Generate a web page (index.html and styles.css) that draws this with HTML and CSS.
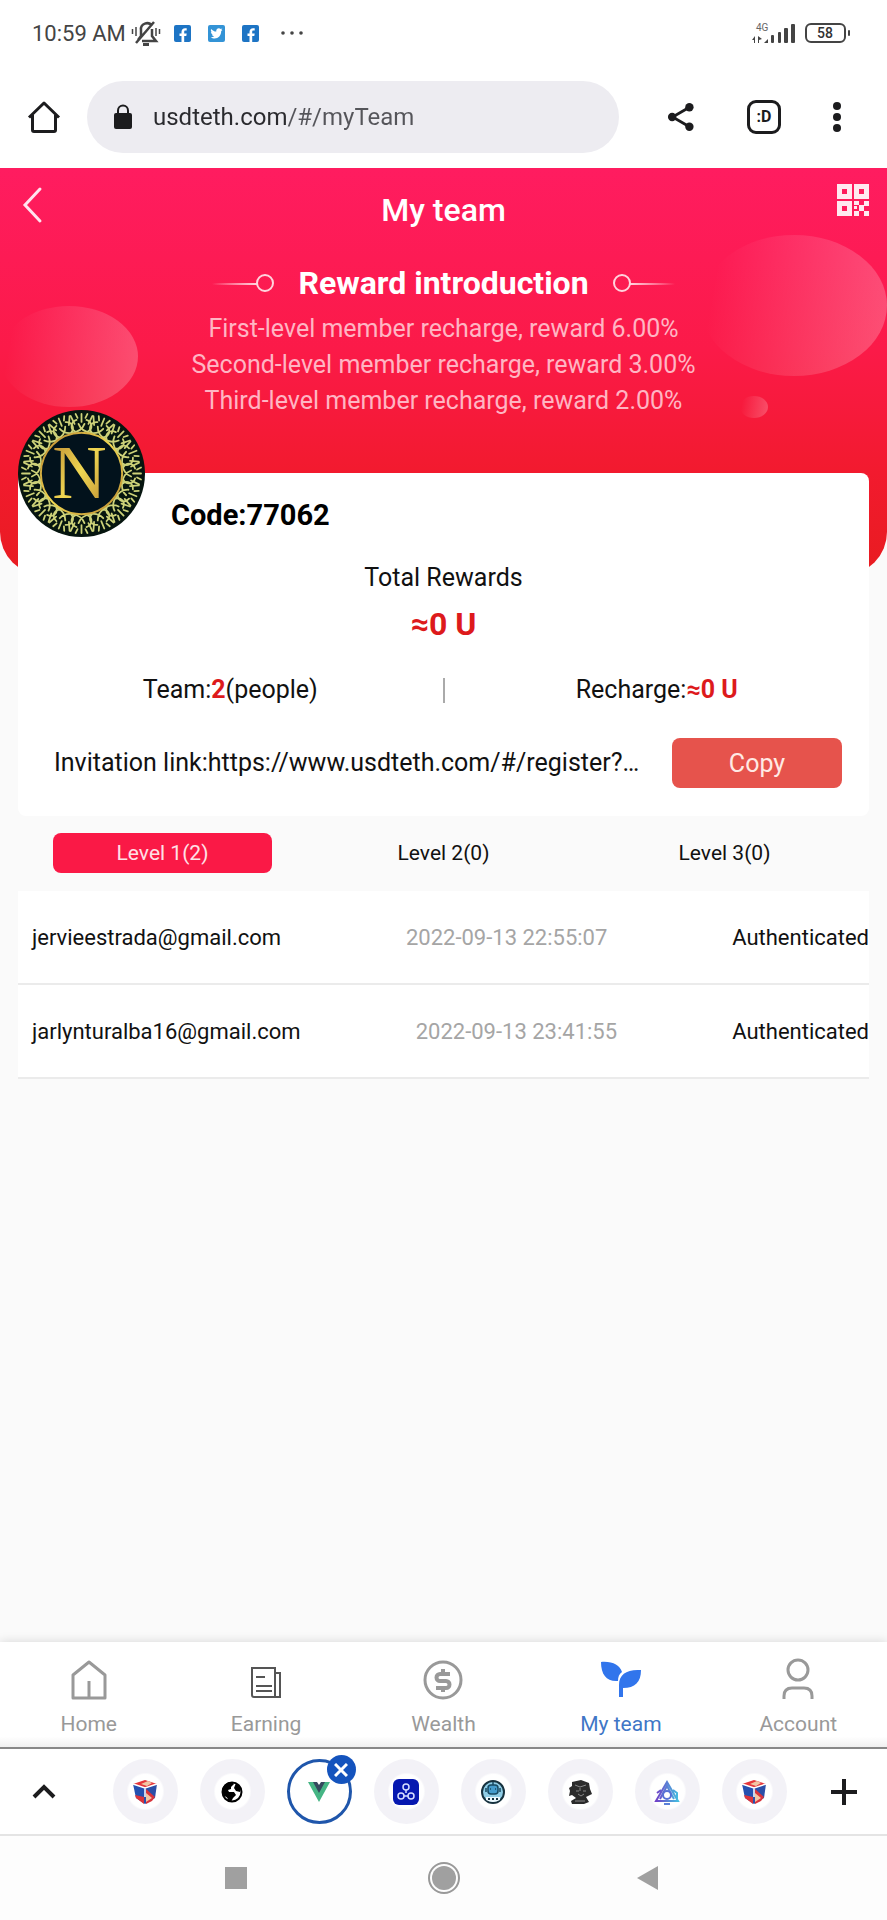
FILE: index.html
```html
<!DOCTYPE html>
<html lang="en">
<head>
    <meta charset="utf-8">
    <meta name="viewport" content="width=device-width, initial-scale=1">
    <title>My team</title>
    <link rel="stylesheet" href="styles.css">
</head>
<body>
    <div class="status-bar">
        <span class="time">10:59 AM</span>
        <svg class="bell" width="30" height="26" viewBox="0 0 30 26" fill="none" stroke="#444" stroke-width="2">
            <path d="M7 20l3-4v-6a6 6 0 0 1 11-4M21 9v7l4 5H11M5 23L23 2" stroke-width="2.500" />
            <path d="M12 24.500h6" stroke-width="3" />
            <path d="M1.500 9v5M5 7v9M28.500 9v5M25 8v8" stroke-width="1.500" />
        </svg>
        <svg width="17" height="17" viewBox="0 0 17 17">
            <rect width="17" height="17" rx="2" fill="#1d74c4" />
            <path d="M7.500 17v-6h-2V8.500h2V7c0-2.500 1.400-3.800 3.600-3.800h1.600v2.400h-1.200c-1 0-1.300.5-1.300 1.300v1.600h2.500l-.4 2.500h-2.100v6z" fill="#fff" />
        </svg>
        <svg width="17" height="17" viewBox="0 0 17 17">
            <rect width="17" height="17" rx="2" fill="#3393d6" />
            <path d="M14.500 5l-1.300 1.100c.1 4.500-3 7.400-6.500 7.400-1.500 0-3-.4-4-1.200 1.400.1 2.600-.2 3.500-1-1.200-.1-2-.8-2.300-1.700h1c-1.300-.4-2-1.300-2-2.500l1 .2c-1.100-.9-1.300-2.200-.7-3.300 1.300 1.600 3 2.500 5.100 2.600-.4-2 .9-3.300 2.500-3.300.8 0 1.400.3 1.900.8l1.600-.6c-.2.700-.5 1-1 1.400z" fill="#fff" />
        </svg>
        <svg width="17" height="17" viewBox="0 0 17 17">
            <rect width="17" height="17" rx="2" fill="#1d74c4" />
            <path d="M7.500 17v-6h-2V8.500h2V7c0-2.500 1.400-3.800 3.600-3.800h1.600v2.400h-1.200c-1 0-1.300.5-1.300 1.300v1.600h2.500l-.4 2.500h-2.100v6z" fill="#fff" />
        </svg>
        <svg class="more" width="24" height="4" viewBox="0 0 24 4" fill="#444">
            <circle cx="3" cy="2" r="1.800" /><circle cx="12" cy="2" r="1.800" /><circle cx="21" cy="2" r="1.800" />
        </svg>
        <svg class="signal" width="44" height="24" viewBox="0 0 44 24" fill="#444">
            <text x="4" y="10" font-family="Roboto, sans-serif" font-size="10" fill="#666">4G</text>
            <path d="M0 19l3-4v7H2v-3zM6 15l4 3-3 1v3H6zM12 22l4-4v4z" />
            <rect x="19" y="14" width="3" height="8" rx="1" />
            <rect x="26" y="11" width="3" height="11" rx="1" />
            <rect x="32" y="7" width="4" height="15" rx="1" />
            <rect x="39" y="3" width="4" height="19" rx="1" />
        </svg>
        <svg width="46" height="20" viewBox="0 0 46 20">
            <rect x="1" y="1" width="39" height="18" rx="5" fill="#fff" stroke="#444" stroke-width="2" />
            <rect x="43" y="7" width="2" height="6" rx="1" fill="#444" />
            <text x="20" y="15" text-anchor="middle" font-family="Roboto, sans-serif" font-size="14" font-weight="500" fill="#333">58</text>
        </svg>
    </div>

    <header class="browser-bar">
        <button class="icon-btn" aria-label="Home page">
            <svg width="34" height="34" viewBox="0 0 34 34" fill="none" stroke="#1c1c1e" stroke-width="3">
                <path d="M2 17.500L17 3l15 14.500M5.500 15v15q0 1.500 1.500 1.500h20q1.500 0 1.500-1.500V15" stroke-linejoin="round" />
            </svg>
        </button>
        <label class="address">
            <svg width="20" height="26" viewBox="0 0 20 26">
                <rect x="1" y="9" width="18" height="16" rx="2" fill="#1c1c1e" />
                <path d="M5 10V6.500a5 5 0 0 1 10 0V10" fill="none" stroke="#1c1c1e" stroke-width="2" />
            </svg>
            <input class="address-input" type="text" aria-label="Address" value="usdteth.com/#/myTeam">
        </label>
        <div class="browser-actions">
            <button class="icon-btn" aria-label="Share">
                <svg width="28" height="30" viewBox="0 0 30 32" fill="#1c1c1e">
                    <path d="M24 5.500L6 16l18 10.500" fill="none" stroke="#1c1c1e" stroke-width="3" />
                    <circle cx="24" cy="5.500" r="4.500" /><circle cx="5.500" cy="16" r="4.500" /><circle cx="24" cy="26.500" r="4.500" />
                </svg>
            </button>
            <button class="tab-count" aria-label="Tabs">:D</button>
            <button class="icon-btn" aria-label="Menu">
                <svg width="8" height="30" viewBox="0 0 8 30" fill="#1c1c1e">
                    <circle cx="4" cy="4" r="4" /><circle cx="4" cy="15" r="4" /><circle cx="4" cy="26" r="4" />
                </svg>
            </button>
        </div>
    </header>

    <main class="page">
        <section class="hero">
            <div class="bubble bubble-left"></div>
            <div class="bubble bubble-right"></div>
            <div class="bubble bubble-small"></div>
            <div class="hero-top">
                <button class="icon-btn back" aria-label="Back">
                    <svg width="28" height="40" viewBox="0 0 28 40" fill="none" stroke="#ffe3ee" stroke-width="3" stroke-linecap="round">
                        <path d="M22 5L7 21l15 16" />
                    </svg>
                </button>
                <h1>My team</h1>
                <button class="icon-btn qr" aria-label="QR code">
                    <svg width="32" height="32" viewBox="0 0 32 32" fill="#ffe9f0">
                        <path fill-rule="evenodd" d="M0 0h15v15H0zM5 5v5h5V5zM17 0h15v15H17zM22 5v5h5V5zM0 17h15v15H0zM5 22v5h5v-5z" />
                        <path d="M17 17h5v4h-5zM27 17h5v5h-5zM22 21h5v6h-5zM17 27h5v5h-5zM27 27h5v5h-5zM17 22h3v3h-3z" />
                    </svg>
                </button>
            </div>
            <div class="reward-title">
                <svg width="62" height="20" viewBox="0 0 62 20">
                    <defs>
                        <linearGradient id="fade">
                            <stop offset="0" stop-color="#fff" stop-opacity="0" />
                            <stop offset="1" stop-color="#ffd3dd" />
                        </linearGradient>
                    </defs>
                    <rect x="0" y="10" width="45" height="2" fill="url(#fade)" />
                    <circle cx="53" cy="10" r="8" fill="none" stroke="#ffd3dd" stroke-width="2" />
                </svg>
                <h2>Reward introduction</h2>
                <svg width="62" height="20" viewBox="0 0 62 20">
                    <g transform="matrix(-1 0 0 1 62 0)">
                        <rect x="0" y="10" width="45" height="2" fill="url(#fade)" />
                        <circle cx="53" cy="10" r="8" fill="none" stroke="#ffd3dd" stroke-width="2" />
                    </g>
                </svg>
            </div>
            <p>First-level member recharge, reward 6.00%</p>
            <p>Second-level member recharge, reward 3.00%</p>
            <p>Third-level member recharge, reward 2.00%</p>
        </section>

        <section class="card">
            <svg class="avatar" viewBox="0 0 128 128">
                <defs>
                    <linearGradient id="gold" x1="0" y1="0" x2="1" y2="1">
                        <stop offset="0" stop-color="#b9842f" />
                        <stop offset=".5" stop-color="#f0d752" />
                        <stop offset="1" stop-color="#b8862e" />
                    </linearGradient>
                    <g id="lace" fill="none" stroke="#cdd279" stroke-width="1.800" stroke-linecap="round">
                        <path d="M58 22c-6-3-5-10 1-12M70 22c6-3 5-10-1-12M54 23q10-1 13-9M74 23q-10-1-13-9" />
                        <path d="M64 12V4M57 14l-4-8M71 14l4-8M60 8l-2-4M68 8l2-4" />
                    </g>
                    <g id="lace-quarter">
                        <use href="#lace" />
                        <use href="#lace" transform="rotate(22.500 64 64)" />
                        <use href="#lace" transform="rotate(45 64 64)" />
                        <use href="#lace" transform="rotate(67.500 64 64)" />
                    </g>
                </defs>
                <circle cx="64" cy="64" r="64" fill="#06150f" />
                <use href="#lace-quarter" />
                <use href="#lace-quarter" transform="rotate(90 64 64)" />
                <use href="#lace-quarter" transform="rotate(180 64 64)" />
                <use href="#lace-quarter" transform="rotate(270 64 64)" />
                <circle cx="64" cy="64" r="41" fill="#02121c" stroke="url(#gold)" stroke-width="2" />
                <text x="62" y="89" text-anchor="middle" font-family="Liberation Serif, serif" font-size="76" fill="url(#gold)">N</text>
            </svg>
            <div class="code">Code:77062</div>
            <div class="total-label">Total Rewards</div>
            <div class="total-value">≈0 U</div>
            <div class="totals">
                <div>Team:<b>2</b>(people)</div>
                <span class="divider"></span>
                <div>Recharge:<b>≈0 U</b></div>
            </div>
            <div class="invite">
                <span class="invite-link">Invitation link:https://www.usdteth.com/#/register?…</span>
                <button class="copy">Copy</button>
            </div>
        </section>

        <div class="levels">
            <button class="level active">Level 1(2)</button>
            <button class="level">Level 2(0)</button>
            <button class="level">Level 3(0)</button>
        </div>

        <ul class="members">
            <li>
                <span>jervieestrada@gmail.com</span>
                <time>2022-09-13 22:55:07</time>
                <span>Authenticated</span>
            </li>
            <li>
                <span>jarlynturalba16@gmail.com</span>
                <time>2022-09-13 23:41:55</time>
                <span>Authenticated</span>
            </li>
        </ul>
    </main>

    <nav class="tabbar">
        <a href="#home">
            <svg width="44" height="44" viewBox="0 0 44 44" fill="none" stroke="#999" stroke-width="3">
                <path d="M6 40V17L22 4l16 13v23zM22 23v17" stroke-linejoin="round" />
            </svg>
            Home
        </a>
        <a href="#earning">
            <svg width="44" height="44" viewBox="0 0 44 44" fill="none" stroke="#555" stroke-width="2">
                <path d="M8 10h23v29H10q-2 0-2-2zM31 15h5v24h-5M12 19h9M12 28h16M12 33h16" />
            </svg>
            Earning
        </a>
        <a href="#wealth">
            <svg width="44" height="44" viewBox="0 0 44 44" fill="none" stroke="#999" stroke-width="3">
                <circle cx="22" cy="22" r="18" />
                <path d="M29 16H19a3.500 3.500 0 0 0 0 7h6a3.500 3.500 0 0 1 0 7H15M22 11v5M22 29v5" stroke-width="4" />
            </svg>
            Wealth
        </a>
        <a class="current" href="#team">
            <svg width="44" height="44" viewBox="0 0 44 44" fill="#3175ec">
                <path d="M2 4c11-1 19 3 21 10-3 2-4 5-4 9C8 24 2 17 2 4z" />
                <path d="M42 12c0 12-6 18-18 18v9h-4V27c0-11 8-16 22-15z" />
            </svg>
            My team
        </a>
        <a href="#account">
            <svg width="44" height="44" viewBox="0 0 44 44" fill="none" stroke="#999" stroke-width="3">
                <circle cx="22" cy="12" r="10" />
                <path d="M8 41v-3q0-8 8-8h12q8 0 8 8v3" />
            </svg>
            Account
        </a>
    </nav>

    <div class="tab-strip">
        <button class="icon-btn" aria-label="Expand">
            <svg width="24" height="16" viewBox="0 0 24 16" fill="none" stroke="#1c1c1e" stroke-width="4"><path d="M2 13L12 3l10 10" /></svg>
        </button>
        <div class="tabs">
            <button class="tab" aria-label="Tab 1">
                <svg width="26" height="26" viewBox="0 0 26 26">
                    <defs>
                        <g id="cube">
                            <path d="M1 5L13 8v17L4 19z" fill="#2450b0" />
                            <path d="M25 5L13 8v17l10-6z" fill="#2b4fa8" />
                            <path d="M1 5l12-4 12 4-12 4z" fill="#e5373b" />
                            <path d="M3 16l9 2v7l-8-6zM14 10l9 8-3 4-6 3z" fill="#d9343c" />
                            <path d="M9 5l7-3 4 2-5 3zM14 14l6 5-6 4z" fill="#f1c6a4" />
                            <path d="M1 5l12 4 12-4M13 9v9" fill="none" stroke="#fff" stroke-width="1.500" />
                        </g>
                    </defs>
                    <use href="#cube" />
                </svg>
            </button>
            <button class="tab" aria-label="Tab 2">
                <svg width="26" height="26" viewBox="0 0 26 26">
                    <circle cx="13" cy="13" r="9.500" fill="#fff" stroke="#000" stroke-width="2" />
                    <path d="M3 12c1-6 5-9 10-9l2 2-3 3v2l-3 1 1 2h5l2 3-3 3-2 4-3-1c0-3-1-4-4-5zM17 4l5 5-1 4-4-1-2-3z" fill="#000" />
                </svg>
            </button>
            <button class="tab selected" aria-label="Close tab 3">
                <svg width="26" height="26" viewBox="0 0 26 26">
                    <path d="M2 3h6l5 9 5-9h6L13 23z" fill="#45b584" />
                    <path d="M7 3h4l2 3 2-3h4l-6 11z" fill="#34495e" />
                </svg>
                <span class="close">
                    <svg width="14" height="14" viewBox="0 0 14 14" stroke="#fff" stroke-width="3"><path d="M1 1l12 12M13 1L1 13" /></svg>
                </span>
            </button>
            <button class="tab" aria-label="Tab 4">
                <svg width="26" height="26" viewBox="0 0 26 26">
                    <rect width="26" height="26" rx="6" fill="#0618b0" />
                    <g fill="none" stroke="#d5ddff" stroke-width="1.500">
                        <circle cx="13" cy="8" r="3" /><circle cx="8" cy="17" r="3" /><circle cx="18" cy="17" r="3" />
                        <path d="M13 11v3M11 17h4" />
                    </g>
                </svg>
            </button>
            <button class="tab" aria-label="Tab 5">
                <svg width="26" height="26" viewBox="0 0 26 26">
                    <circle cx="13" cy="13" r="11" fill="#8fcde6" stroke="#17323f" stroke-width="2" />
                    <rect x="8" y="6" width="10" height="9" rx="3" fill="#459ccc" stroke="#174a63" stroke-width="1.500" />
                    <path d="M10 10h1M15 10h1M6 9v4M20 9v4M13 3v3" stroke="#174a63" stroke-width="1.500" />
                    <path d="M6 18h14v3q-7 4-14 0z" fill="#eefaff" />
                    <path d="M8 20h2M12 20h2M16 20h2" stroke="#17323f" stroke-width="2" />
                </svg>
            </button>
            <button class="tab" aria-label="Tab 6">
                <svg width="26" height="26" viewBox="0 0 26 26">
                    <path d="M5 3l9-2 8 3 1 6 2 5-4 2-2 1 3 5-5 2H5l-1-3 5-3-4-3-3 1 1-5-1-3 3-2z" fill="#2b2b2b" />
                    <path d="M8 6l5 2 6-2M9 12h3M16 12h3M11 15l3 2 3-2M8 22h10M13 9v3" fill="none" stroke="#888" />
                </svg>
            </button>
            <button class="tab" aria-label="Tab 7">
                <svg width="26" height="26" viewBox="0 0 26 26" fill="none" stroke-width="2">
                    <defs>
                        <linearGradient id="triangle"><stop offset="0" stop-color="#7040c8" /><stop offset="1" stop-color="#44bde0" /></linearGradient>
                    </defs>
                    <path d="M13 3L2 22h22zM7 11L3 14M6 20l7-13 7 13M19 11l4 3v8" stroke="url(#triangle)" />
                    <circle cx="13" cy="16" r="4" stroke="#5872d6" />
                    <path d="M10 25h6" stroke="#5a80d8" />
                </svg>
            </button>
            <button class="tab" aria-label="Tab 8">
                <svg width="26" height="26" viewBox="0 0 26 26"><use href="#cube" /></svg>
            </button>
        </div>
        <button class="icon-btn" aria-label="New tab">
            <svg width="26" height="26" viewBox="0 0 26 26" stroke="#1c1c1e" stroke-width="4"><path d="M0 13h26M13 0v26" /></svg>
        </button>
    </div>

    <div class="system-nav">
        <button class="icon-btn" aria-label="Recent apps">
            <svg width="32" height="32" viewBox="0 0 32 32"><rect x="5" y="5" width="22" height="22" fill="#a0a0a0" /></svg>
        </button>
        <button class="icon-btn" aria-label="Home screen">
            <svg width="32" height="32" viewBox="0 0 32 32">
                <circle cx="16" cy="16" r="15" fill="none" stroke="#999" stroke-width="2" /><circle cx="16" cy="16" r="12" fill="#a0a0a0" />
            </svg>
        </button>
        <button class="icon-btn" aria-label="Go back">
            <svg width="32" height="32" viewBox="0 0 32 32"><path d="M1 16L22 4v24z" fill="#a0a0a0" /></svg>
        </button>
    </div>
</body>
</html>
```
FILE: styles.css
```css
* {
    box-sizing: border-box;
}
body {
    margin: 0;
    min-height: 100vh;
    display: flex;
    flex-direction: column;
    background-color: #fff;
    color: #111;
    font-family: Roboto, "Liberation Sans", sans-serif;
    font-size: 25px;
}
h1, h2, p, ul {
    margin: 0;
    padding: 0;
    font-size: inherit;
}
svg {
    display: block;
    flex-shrink: 0;
}
button {
    border: 0;
    padding: 0;
    background: none;
    color: inherit;
    font-family: inherit;
    font-size: inherit;
    cursor: pointer;
}
a {
    color: inherit;
    text-decoration: none;
}
.icon-btn {
    display: flex;
    align-items: center;
    justify-content: center;
}

/* phone status bar */
.status-bar {
    display: flex;
    align-items: center;
    gap: 17px;
    height: 66px;
    padding: 0 36px 0 32px;
}
.time {
    font-size: 22px;
    color: #444;
}
.bell {
    margin: 0 -4px 0 -12px;
}
.more {
    margin-left: 4px;
}
.signal {
    margin-left: auto;
    margin-right: -8px;
}

/* browser toolbar */
.browser-bar {
    display: flex;
    align-items: center;
    gap: 26px;
    padding: 15px 46px 15px 27px;
}
.address {
    flex: 1;
    display: flex;
    align-items: center;
    gap: 20px;
    height: 72px;
    padding: 0 26px;
    border-radius: 36px;
    background-color: #edecf1;
}
.address-input {
    flex: 1;
    min-width: 0;
    border: 0;
    padding: 0;
    outline: none;
    font-family: inherit;
    font-size: 24px;
    /* the path is lighter than the host */
    background: linear-gradient(to right, #2a2a2e 134px, #55555a 134px);
    background-clip: text;
    -webkit-background-clip: text;
    color: transparent;
}
.browser-actions {
    display: flex;
    align-items: center;
    gap: 52px;
    margin-left: 22px;
}
.tab-count {
    width: 34px;
    height: 34px;
    border: 3px solid #1c1c1e;
    border-radius: 9px;
    color: #1c1c1e;
    font-size: 16px;
    font-weight: 700;
    line-height: 26px;
}

/* page */
.page {
    flex: 1;
    background-color: #fafafa;
}
.hero {
    position: relative;
    overflow: hidden;
    padding-bottom: 156px;
    border-radius: 0 0 43px 43px;
    background: linear-gradient(#ff1c60, #fb1a48 45%, #f21a2e 75%, #e81c20);
    color: #ffb5c3;
    text-align: center;
    line-height: 36px;
}
.bubble {
    position: absolute;
    border-radius: 50%;
    background: linear-gradient(100deg, rgba(255, 255, 255, 0) 10%, rgba(255, 255, 255, .24));
}
.bubble-left {
    top: 138px;
    left: 0;
    width: 138px;
    height: 101px;
}
.bubble-right {
    top: 67px;
    right: 0;
    width: 186px;
    height: 141px;
}
.bubble-small {
    top: 228px;
    right: 119px;
    width: 28px;
    height: 22px;
}
.hero-top {
    display: grid;
    grid-template-columns: 1fr auto 1fr;
    align-items: start;
    padding: 16px 18px 0;
}
.hero-top h1 {
    color: #fff;
    font-size: 32px;
    font-weight: 500;
    line-height: 52px;
}
.back {
    justify-self: start;
}
.qr {
    justify-self: end;
}
.reward-title {
    display: flex;
    align-items: center;
    justify-content: center;
    gap: 24px;
    margin: 27px 0 8px;
}
.reward-title h2 {
    color: #fff;
    font-size: 32px;
    font-weight: 700;
    line-height: 40px;
}

.card {
    position: relative;
    margin: -102px 18px 0;
    padding: 24px 27px 28px 36px;
    border-radius: 8px;
    background-color: #fff;
    text-align: center;
    line-height: 36px;
}
/* sits half over the hero */
.avatar {
    position: absolute;
    top: -63px;
    left: 0;
    width: 127px;
    height: 127px;
}
.code {
    margin: 0 0 27px 117px;
    color: #000;
    font-size: 29px;
    font-weight: 700;
    text-align: left;
}
.total-label, .total-value, .totals {
    margin-left: -36px;
    margin-right: -27px;
}
.total-value {
    margin-top: 8px;
    margin-bottom: 28px;
    color: #dd1a1c;
    font-size: 32px;
    font-weight: 700;
    line-height: 40px;
}
.totals {
    display: grid;
    grid-template-columns: 1fr 2px 1fr;
    align-items: center;
    margin-bottom: 30px;
}
.totals b {
    color: #dd1a1c;
}
.divider {
    height: 25px;
    background-color: #aaa;
}
.invite {
    display: flex;
    align-items: center;
    gap: 24px;
}
.invite-link {
    flex: 1;
    min-width: 0;
    overflow: hidden;
    white-space: nowrap;
    text-overflow: ellipsis;
    text-align: left;
}
.copy {
    width: 170px;
    height: 50px;
    border-radius: 8px;
    background-color: #e6534c;
    color: #ffe9e4;
}

.levels {
    display: grid;
    grid-template-columns: repeat(3, 1fr);
    justify-items: center;
    padding: 17px 22px 18px;
}
.level {
    width: 78%;
    height: 40px;
    border-radius: 8px;
    font-size: 21px;
}
.level.active {
    background-color: #fa1946;
    color: #ffe0e6;
}

.members {
    margin: 0 18px;
    list-style: none;
    font-size: 22px;
}
.members li {
    display: flex;
    align-items: center;
    justify-content: space-between;
    height: 94px;
    padding-left: 14px;
    border-bottom: 2px solid #ebebeb;
    background-color: #fff;
}
.members time {
    color: #a5a5a5;
}

/* site navigation */
.tabbar {
    display: grid;
    grid-template-columns: repeat(5, 1fr);
    height: 107px;
    padding-top: 16px;
    border-bottom: 2px solid #888;
    background: linear-gradient(#fff 90%, #f0f0f0);
    box-shadow: 0 0 10px rgba(0, 0, 0, .15);
    color: #999;
    font-size: 21px;
}
.tabbar a {
    display: flex;
    flex-direction: column;
    align-items: center;
    gap: 10px;
}
.tabbar .current {
    color: #3f76c6;
}

/* open tabs */
.tab-strip {
    position: relative;
    display: flex;
    align-items: center;
    justify-content: space-between;
    height: 87px;
    padding: 0 30px 0 32px;
    border-bottom: 2px solid #e4e4e4;
    background-color: #fff;
}
.tabs {
    display: flex;
    gap: 22px;
    margin-left: 12px;
}
.tab {
    position: relative;
    display: flex;
    align-items: center;
    justify-content: center;
    width: 65px;
    height: 65px;
    border-radius: 50%;
    background: radial-gradient(circle, #fff 17px, #f3f2f7 19px);
}
.tab.selected {
    border: 3px solid #1f56ab;
    background: #fff;
}
.close {
    position: absolute;
    top: -7px;
    right: -7px;
    display: flex;
    align-items: center;
    justify-content: center;
    width: 29px;
    height: 29px;
    border-radius: 50%;
    background-color: #1453bd;
}

.system-nav {
    display: flex;
    align-items: flex-start;
    justify-content: center;
    gap: 176px;
    height: 84px;
    padding-top: 26px;
    background-color: #fdfdfd;
}
```
